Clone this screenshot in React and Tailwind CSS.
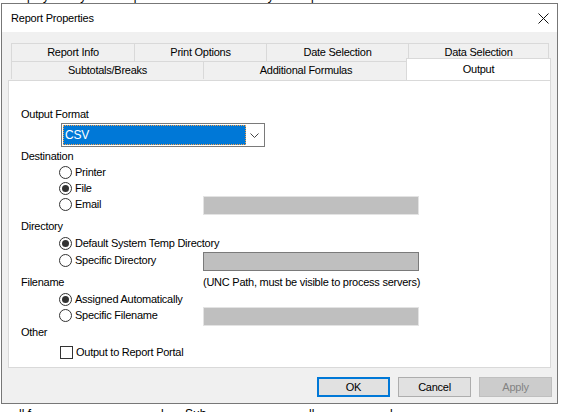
import React from 'react';

function Radio({ checked, label }) {
    return (
        <div className="flex items-center">
            <span className="w-[13px] h-[13px] rounded-full border border-[#333333] bg-white flex items-center justify-center">
                {checked && <span className="w-[7px] h-[7px] rounded-full bg-[#333333]" />}
            </span>
            <span className="ml-[3px]">{label}</span>
        </div>
    );
}

function Field({ dark }) {
    return (
        <div
            className={`w-[216px] h-[19px] bg-[#bfbfbf] border ${dark ? 'border-[#7a7a7a]' : 'border-[#e3e3e3]'}`}
        />
    );
}

function Tab({ label, w, first }) {
    return (
        <div
            className={`h-[18px] border-t border-r border-[#d9d9d9] bg-[#f0f0f0] text-center pt-[2px] ${first ? 'border-l' : 'border-l -ml-px'}`}
            style={{ width: w }}
        >
            {label}
        </div>
    );
}

export default function App() {
    return (
        <div className="w-[562px] h-[412px] bg-white overflow-hidden font-['Liberation_Sans',Arial,sans-serif] text-black">
            {/* window behind, only edges showing */}
            <div className="h-[3px] overflow-hidden text-[12px] leading-[14px]">
                <div className="flex -mt-[11px]">
                    <span className="ml-[9px] w-[246px]">Employee Pay Data Report</span>
                    <span>Crystal Reports</span>
                </div>
            </div>

            {/* Dialog */}
            <div className="ml-px w-[557px] h-[401px] border border-[#777777] flex flex-col">
                {/* Title bar */}
                <div className="h-[28px] bg-white flex items-center justify-between pl-[9px] pr-[8px] text-[11px] tracking-[-0.2px]">
                    <span>Report Properties</span>
                    <svg width="11" height="11" viewBox="0 0 11 11">
                        <path d="M0.5 0.5 L10.5 10.5 M10.5 0.5 L0.5 10.5" stroke="#111" strokeWidth="1" />
                    </svg>
                </div>

                {/* Body */}
                <div className="flex-1 bg-[#f0f0f0] pt-[11px] px-[6px] text-[11px] leading-[13px] tracking-[-0.25px]">
                    {/* Tabs */}
                    <div className="ml-[3px]">
                        <div className="flex">
                            <Tab label="Report Info" w={124} first />
                            <Tab label="Print Options" w={133} />
                            <Tab label="Date Selection" w={143} />
                            <Tab label="Data Selection" w={141} />
                        </div>
                        <div className="flex items-start">
                            <Tab label="Subtotals/Breaks" w={193} first />
                            <Tab label="Additional Formulas" w={206} />
                            <div className="relative -ml-[3px] -mt-[3px] w-[145px] h-[22px] bg-white border-t border-x border-[#d9d9d9] text-center pt-[4px]">
                                Output
                            </div>
                        </div>
                    </div>

                    {/* Panel */}
                    <div className="h-[288px] border border-[#d9d9d9] bg-white pt-[25px] pl-[12px]">
                        <div className="h-[16px] flex items-center">Output Format</div>

                        <div className="mt-px ml-[40px] w-[204px] h-[24px] border border-[#7a7a7a] bg-white flex items-center p-px">
                            <div className="w-[183px] h-[20px] bg-[#0078d7] border border-dotted border-[#f7a24a] text-white text-[12px] flex items-center pl-px">
                                CSV
                            </div>
                            <div className="flex-1 flex justify-center">
                                <svg width="9" height="5" viewBox="0 0 9 5">
                                    <path d="M0.5 0.5 L4.5 4.5 L8.5 0.5" fill="none" stroke="#444" strokeWidth="1" />
                                </svg>
                            </div>
                        </div>

                        <div className="mt-px h-[16px] flex items-center">Destination</div>
                        <div className="ml-[38px]">
                            <div className="h-[16px] flex items-center">
                                <Radio label="Printer" />
                            </div>
                            <div className="h-[16px] flex items-center">
                                <Radio checked label="File" />
                            </div>
                            <div className="h-[16px] flex items-start">
                                <div className="w-[144px] h-[16px] flex items-center">
                                    <Radio label="Email" />
                                </div>
                                <Field />
                            </div>
                        </div>

                        <div className="mt-[6px] h-[16px] flex items-center">Directory</div>
                        <div className="ml-[38px]">
                            <div className="mt-px h-[16px] flex items-center">
                                <Radio checked label="Default System Temp Directory" />
                            </div>
                            <div className="mt-px h-[16px] flex items-start">
                                <div className="w-[144px] h-[16px] flex items-center">
                                    <Radio label="Specific Directory" />
                                </div>
                                <Field dark />
                            </div>
                        </div>

                        <div className="mt-[6px] h-[16px] flex items-center">
                            <span className="w-[182px]">Filename</span>
                            <span>(UNC Path, must be visible to process servers)</span>
                        </div>
                        <div className="ml-[38px]">
                            <div className="mt-px h-[16px] flex items-center">
                                <Radio checked label="Assigned Automatically" />
                            </div>
                            <div className="h-[16px] flex items-start">
                                <div className="w-[144px] h-[16px] flex items-center">
                                    <Radio label="Specific Filename" />
                                </div>
                                <Field />
                            </div>
                        </div>

                        <div className="mt-px h-[16px] flex items-center">Other</div>
                        <div className="mt-[4px] ml-[39px] h-[16px] flex items-center">
                            <span className="w-[13px] h-[13px] border border-[#333333] bg-white" />
                            <span className="ml-[3px]">Output to Report Portal</span>
                        </div>
                    </div>

                    {/* Buttons */}
                    <div className="mt-[9px] flex justify-end gap-[8px] -mr-px">
                        <button className="w-[73px] h-[20px] bg-[#e1e1e1] border-2 border-[#0078d7] text-[11px]">OK</button>
                        <button className="w-[73px] h-[20px] bg-[#e1e1e1] border border-[#adadad] text-[11px]">Cancel</button>
                        <button className="w-[73px] h-[20px] bg-[#cccccc] border border-[#bfbfbf] text-[#838383] text-[11px]">Apply</button>
                    </div>
                </div>
            </div>

            {/* window behind, bottom edge */}
            <div className="h-[8px] overflow-hidden text-[12px] leading-[14px] pt-[3px]">
                <div className="flex">
                    <span className="ml-[19px] w-[142px]">ll f</span>
                    <span className="w-[24px]">l</span>
                    <span className="w-[124px]">Sub</span>
                    <span className="w-[81px]">ll</span>
                    <span>l</span>
                </div>
            </div>
        </div>
    );
}
